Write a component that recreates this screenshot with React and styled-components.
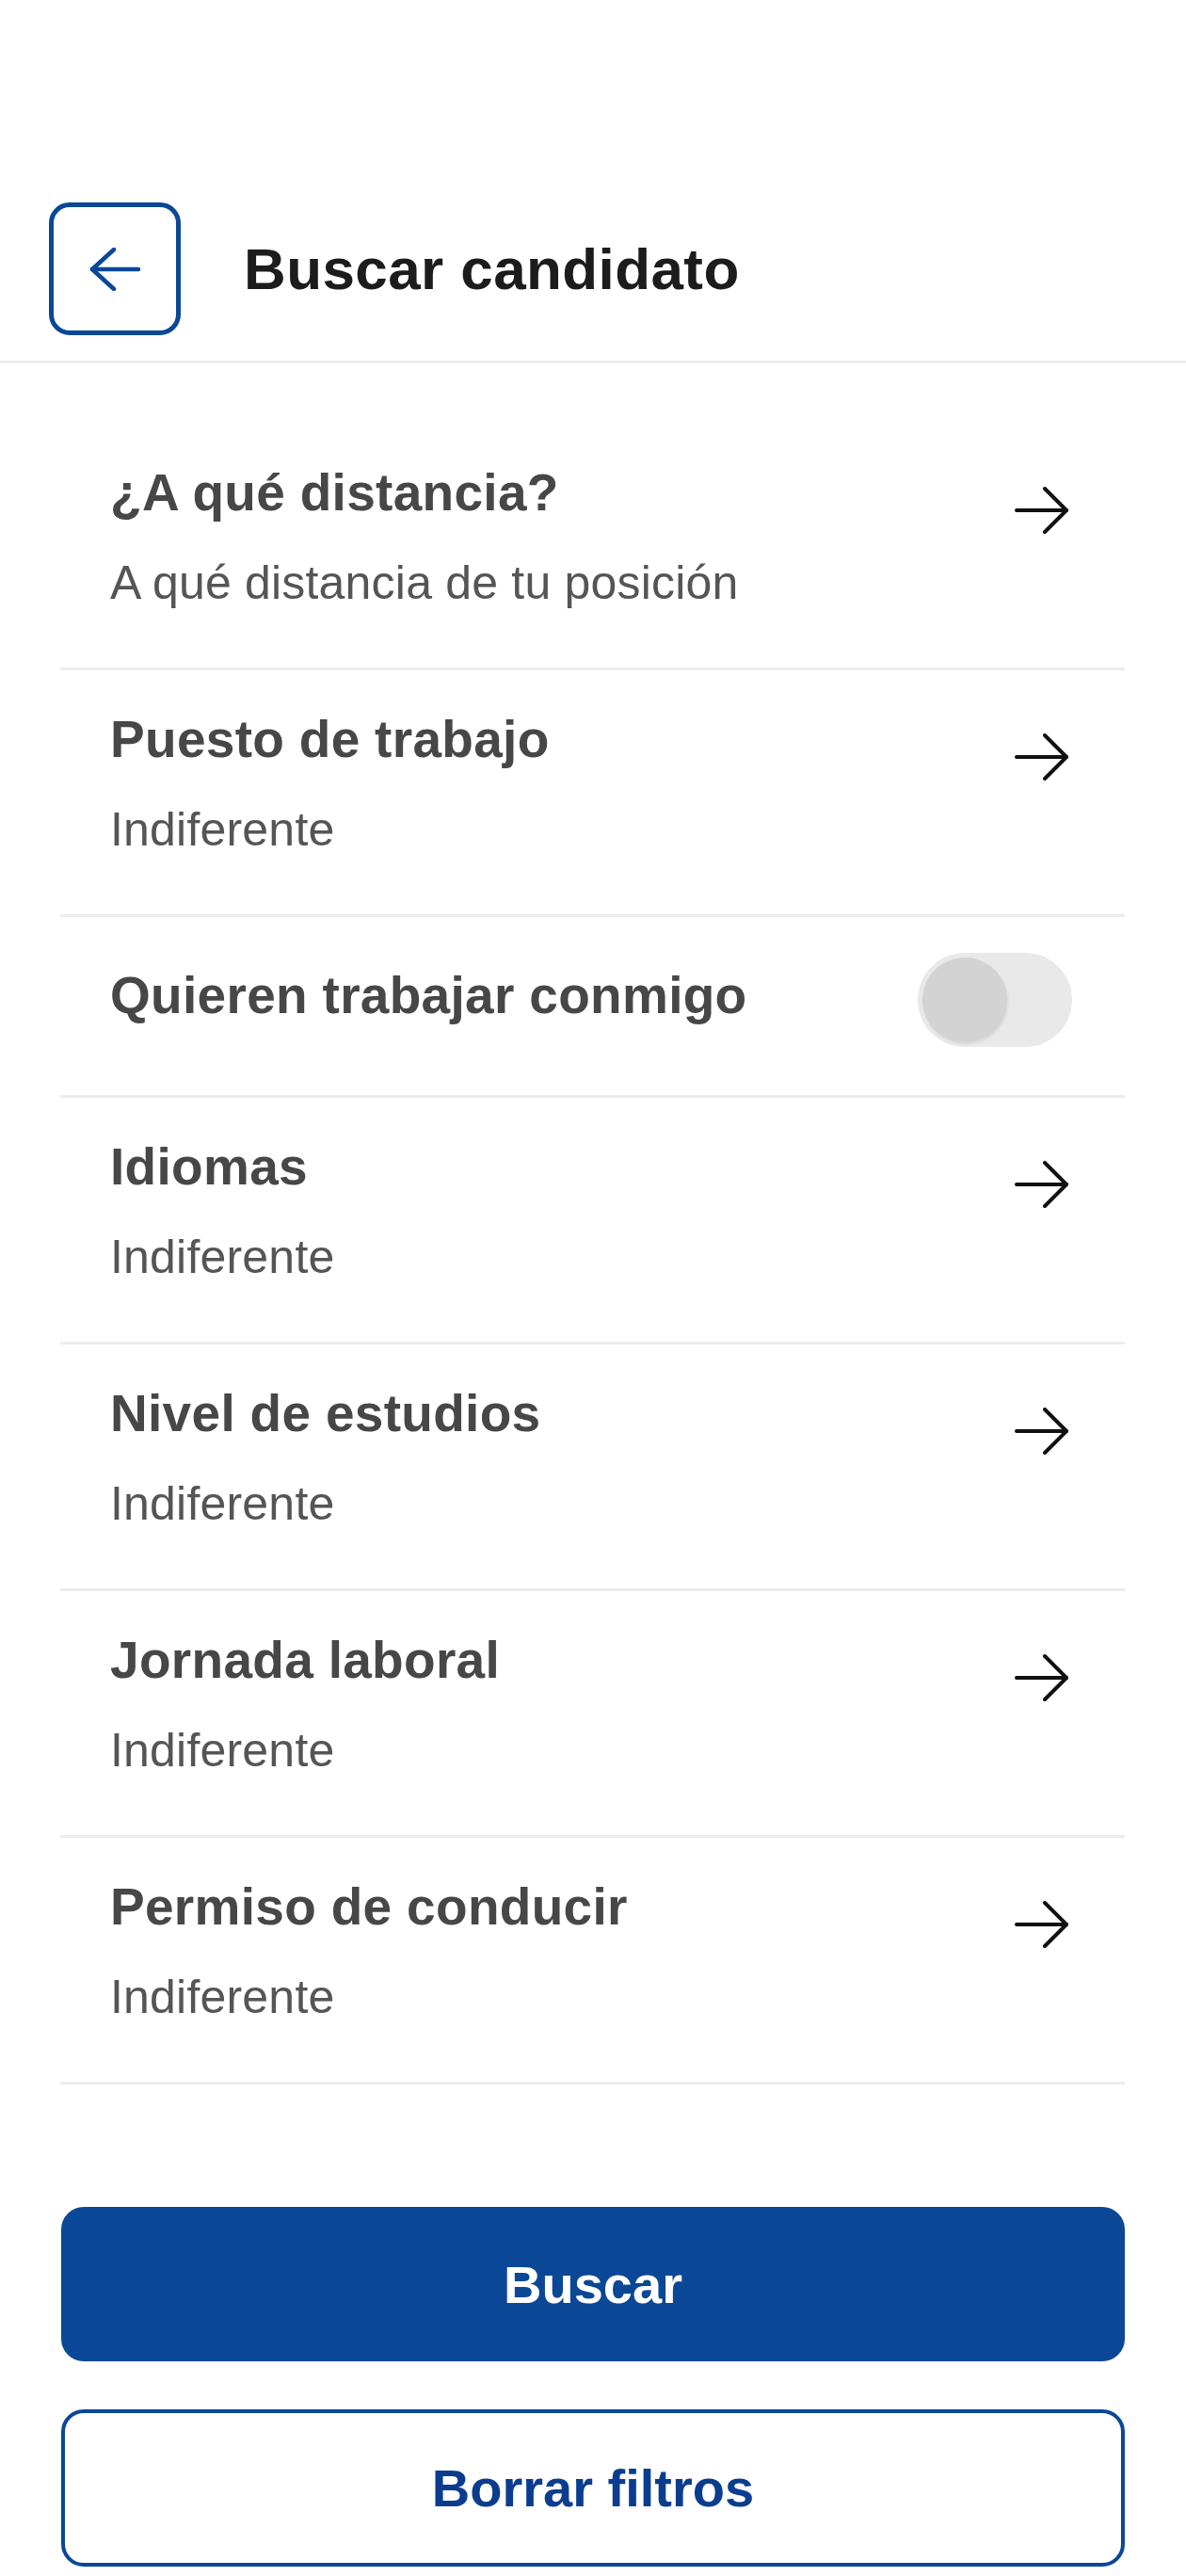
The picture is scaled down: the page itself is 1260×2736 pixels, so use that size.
import React, { useState } from 'react';
import styled, { createGlobalStyle } from 'styled-components';

const filters = [
  { id: 'distance', title: '¿A qué distancia?', value: 'A qué distancia de tu posición' },
  { id: 'job', title: 'Puesto de trabajo', value: 'Indiferente' },
  { id: 'wants', title: 'Quieren trabajar conmigo', toggle: true },
  { id: 'languages', title: 'Idiomas', value: 'Indiferente' },
  { id: 'studies', title: 'Nivel de estudios', value: 'Indiferente' },
  { id: 'schedule', title: 'Jornada laboral', value: 'Indiferente' },
  { id: 'license', title: 'Permiso de conducir', value: 'Indiferente' }
];

const GlobalStyle = createGlobalStyle`
  body {
    margin: 0;
    background: #fff;
    font-family: "Liberation Sans", Arial, sans-serif;
  }
`;

const Page = styled.div`
  width: 1260px;
  min-height: 2736px;
  background: #fff;
`;

const Header = styled.header`
  display: flex;
  align-items: center;
  gap: 67px;
  padding: 215px 52px 27px 52px;
  border-bottom: 3px solid #ececec;
`;

const BackButton = styled.button`
  width: 140px;
  height: 141px;
  box-sizing: border-box;
  border: 5px solid #0a4796;
  border-radius: 22px;
  background: #fff;
  display: flex;
  align-items: center;
  justify-content: center;
  padding: 0;
  cursor: pointer;
`;

const Title = styled.h1`
  margin: 0;
  font-size: 62px;
  font-weight: 700;
  color: #1c1c1c;
  letter-spacing: 0.4px;
`;

const List = styled.div`
  margin: 0 65px 0 64px;
  padding-top: 64px;
`;

const Row = styled.div`
  display: flex;
  align-items: ${props => (props.$center ? 'center' : 'flex-start')};
  padding: ${props => (props.$center ? '38px 56px 51px 53px' : '41px 56px 58px 53px')};
  border-bottom: 3px solid #ececec;
`;

const Texts = styled.div`
  flex: 1;
  display: flex;
  flex-direction: column;
  gap: 32px;
  padding-bottom: ${props => (props.$center ? '10px' : '0')};
`;

const RowTitle = styled.div`
  font-size: 55px;
  line-height: 64px;
  font-weight: 700;
  color: #474747;
  letter-spacing: 0.3px;
`;

const RowValue = styled.div`
  font-size: 50px;
  line-height: 64px;
  color: #555;
  letter-spacing: 0.2px;
`;

const ArrowWrap = styled.div`
  margin-top: 26px;
  margin-right: 3px;
  display: flex;
`;

const Track = styled.button`
  width: 164px;
  height: 100px;
  border: none;
  border-radius: 50px;
  background: #e9e9e9;
  padding: 5px;
  display: flex;
  align-items: center;
  justify-content: ${props => (props.$on ? 'flex-end' : 'flex-start')};
  cursor: pointer;
`;

const Knob = styled.span`
  width: 90px;
  height: 90px;
  border-radius: 50%;
  background: #d3d3d3;
  box-shadow: 1px 2px 3px rgba(0, 0, 0, 0.08);
`;

const Actions = styled.div`
  display: flex;
  flex-direction: column;
  gap: 51px;
  margin: 130px 65px 0 65px;
`;

const ActionButton = styled.button`
  height: ${props => (props.$outline ? '167px' : '164px')};
  border-radius: 24px;
  border: 4px solid #0a4796;
  background: ${props => (props.$outline ? '#fff' : '#0a4796')};
  color: ${props => (props.$outline ? '#0a3d8f' : '#fff')};
  font-family: "Liberation Sans", Arial, sans-serif;
  font-size: 56px;
  font-weight: 700;
  cursor: pointer;
`;

const BackArrow = () => (
  <svg width="56" height="46" viewBox="0 0 56 46" fill="none" stroke="#0a4796" strokeWidth="4.5" strokeLinecap="round" strokeLinejoin="round">
    <path d="M4 23H53" />
    <path d="M27 2L4 23L27 44" />
  </svg>
);

const NextArrow = () => (
  <svg width="58" height="50" viewBox="0 0 58 50" fill="none" stroke="#111" strokeWidth="4" strokeLinecap="round" strokeLinejoin="round">
    <path d="M2 25H55" />
    <path d="M32 2L55 25L32 48" />
  </svg>
);

function App() {
  const [wantsMe, setWantsMe] = useState(false);

  return (
    <Page>
      <GlobalStyle />
      <Header>
        <BackButton aria-label="Volver">
          <BackArrow />
        </BackButton>
        <Title>Buscar candidato</Title>
      </Header>
      <List>
        {filters.map(f =>
          f.toggle ? (
            <Row key={f.id} $center>
              <Texts $center>
                <RowTitle>{f.title}</RowTitle>
              </Texts>
              <Track $on={wantsMe} onClick={() => setWantsMe(!wantsMe)} aria-label={f.title}>
                <Knob />
              </Track>
            </Row>
          ) : (
            <Row key={f.id}>
              <Texts>
                <RowTitle>{f.title}</RowTitle>
                <RowValue>{f.value}</RowValue>
              </Texts>
              <ArrowWrap>
                <NextArrow />
              </ArrowWrap>
            </Row>
          )
        )}
      </List>
      <Actions>
        <ActionButton>Buscar</ActionButton>
        <ActionButton $outline>Borrar filtros</ActionButton>
      </Actions>
    </Page>
  );
}

export default App;
